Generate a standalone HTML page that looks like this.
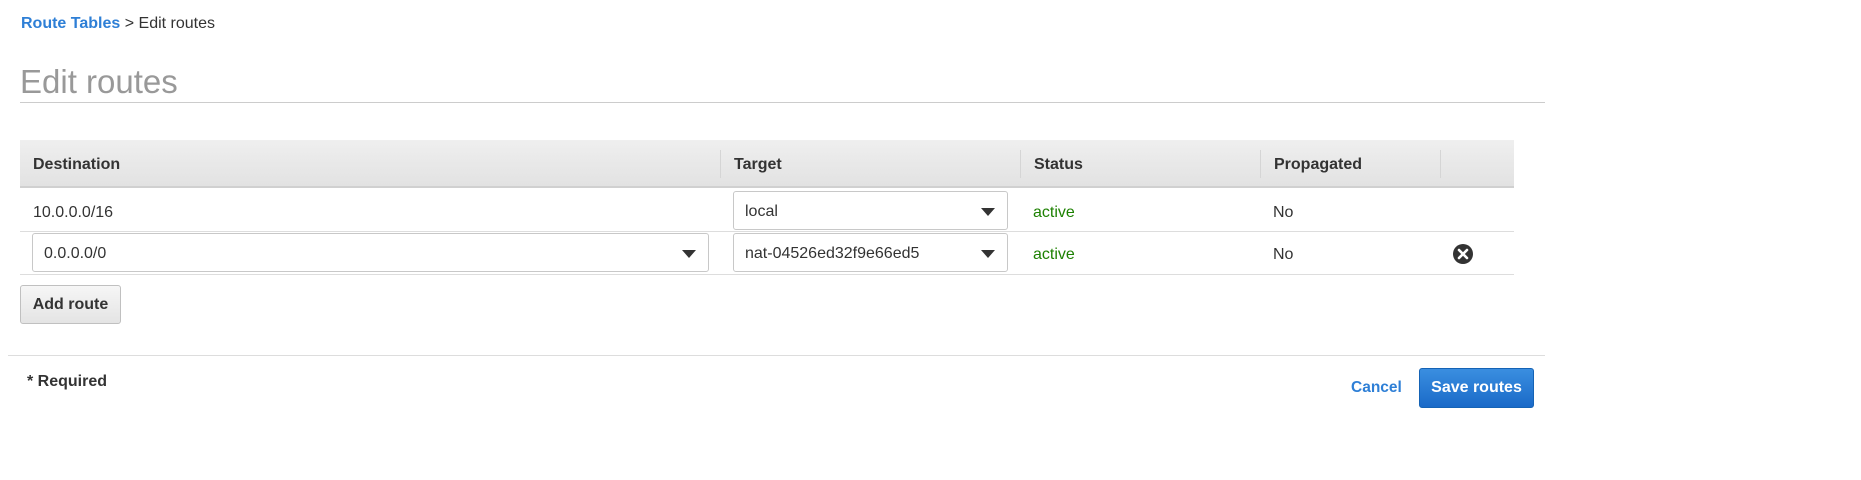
<!DOCTYPE html>
<html><head><style>
body{margin:0;width:1861px;height:480px;background:#fff;font-family:"Liberation Sans",Arial,sans-serif;color:#333;position:relative;overflow:hidden}
.a{position:absolute}
.sel{position:absolute;border:1px solid #c8c8c8;border-radius:3px;background:#fff;box-sizing:border-box;font-size:16px;line-height:40px;padding-left:11px;color:#333}
.sel:after{content:"";position:absolute;right:12px;top:16px;border-left:7px solid transparent;border-right:7px solid transparent;border-top:8px solid #333}
.th{position:absolute;top:156px;font-size:16px;font-weight:bold;color:#333}
.sep{position:absolute;top:150px;width:1px;height:28px;background:#d5d5d5}
.t{position:absolute;font-size:16px;line-height:20px}
</style></head><body>
<div class="a" style="left:21px;top:15px;font-size:16px"><span style="color:#2e7fd6;font-weight:bold">Route Tables</span> &gt; Edit routes</div>
<div class="a" style="left:20px;top:63px;font-size:33px;color:#999">Edit routes</div>
<div class="a" style="left:20px;top:102px;width:1525px;height:1px;background:#ccc"></div>

<div class="a" style="left:20px;top:140px;width:1494px;height:48px;background:linear-gradient(#efefef,#e2e2e2);border-bottom:2px solid #d0d0d0;box-sizing:border-box"></div>
<div class="th" style="left:33px">Destination</div>
<div class="sep" style="left:720px"></div><div class="th" style="left:734px">Target</div>
<div class="sep" style="left:1020px"></div><div class="th" style="left:1034px">Status</div>
<div class="sep" style="left:1260px"></div><div class="th" style="left:1274px">Propagated</div>
<div class="sep" style="left:1440px"></div>

<div class="t" style="left:33px;top:203px">10.0.0.0/16</div>
<div class="sel" style="left:733px;top:191px;width:275px;height:39px">local</div>
<div class="t" style="left:1033px;top:203px;color:#1d8102">active</div>
<div class="t" style="left:1273px;top:203px">No</div>
<div class="a" style="left:20px;top:231px;width:1494px;height:1px;background:#ddd"></div>

<div class="sel" style="left:32px;top:233px;width:677px;height:39px">0.0.0.0/0</div>
<div class="sel" style="left:733px;top:233px;width:275px;height:39px">nat-04526ed32f9e66ed5</div>
<div class="t" style="left:1033px;top:245px;color:#1d8102">active</div>
<div class="t" style="left:1273px;top:245px">No</div>
<svg class="a" style="left:1453px;top:244px" width="20" height="20" viewBox="0 0 20 20"><circle cx="10" cy="10" r="10" fill="#333"/><path d="M6 6L14 14M14 6L6 14" stroke="#fff" stroke-width="2.6" stroke-linecap="round"/></svg>
<div class="a" style="left:20px;top:274px;width:1494px;height:1px;background:#ddd"></div>

<div class="a" style="left:20px;top:285px;width:101px;height:39px;box-sizing:border-box;border:1px solid #c0c0c0;border-radius:3px;background:linear-gradient(#f6f6f6,#e4e4e4);font-size:16px;font-weight:bold;line-height:37px;text-align:center">Add route</div>

<div class="a" style="left:8px;top:355px;width:1537px;height:1px;background:#ddd"></div>
<div class="a" style="left:27px;top:373px;font-size:16px;font-weight:bold">* Required</div>
<div class="a" style="left:1351px;top:379px;font-size:15.5px;font-weight:bold;color:#2e7fd6">Cancel</div>
<div class="a" style="left:1419px;top:368px;width:115px;height:40px;box-sizing:border-box;border:1px solid #1563b5;border-radius:3px;background:linear-gradient(#3a8ee0,#1a6ac8);color:#fff;font-size:16px;font-weight:bold;line-height:38px;text-align:center">Save routes</div>
</body></html>
